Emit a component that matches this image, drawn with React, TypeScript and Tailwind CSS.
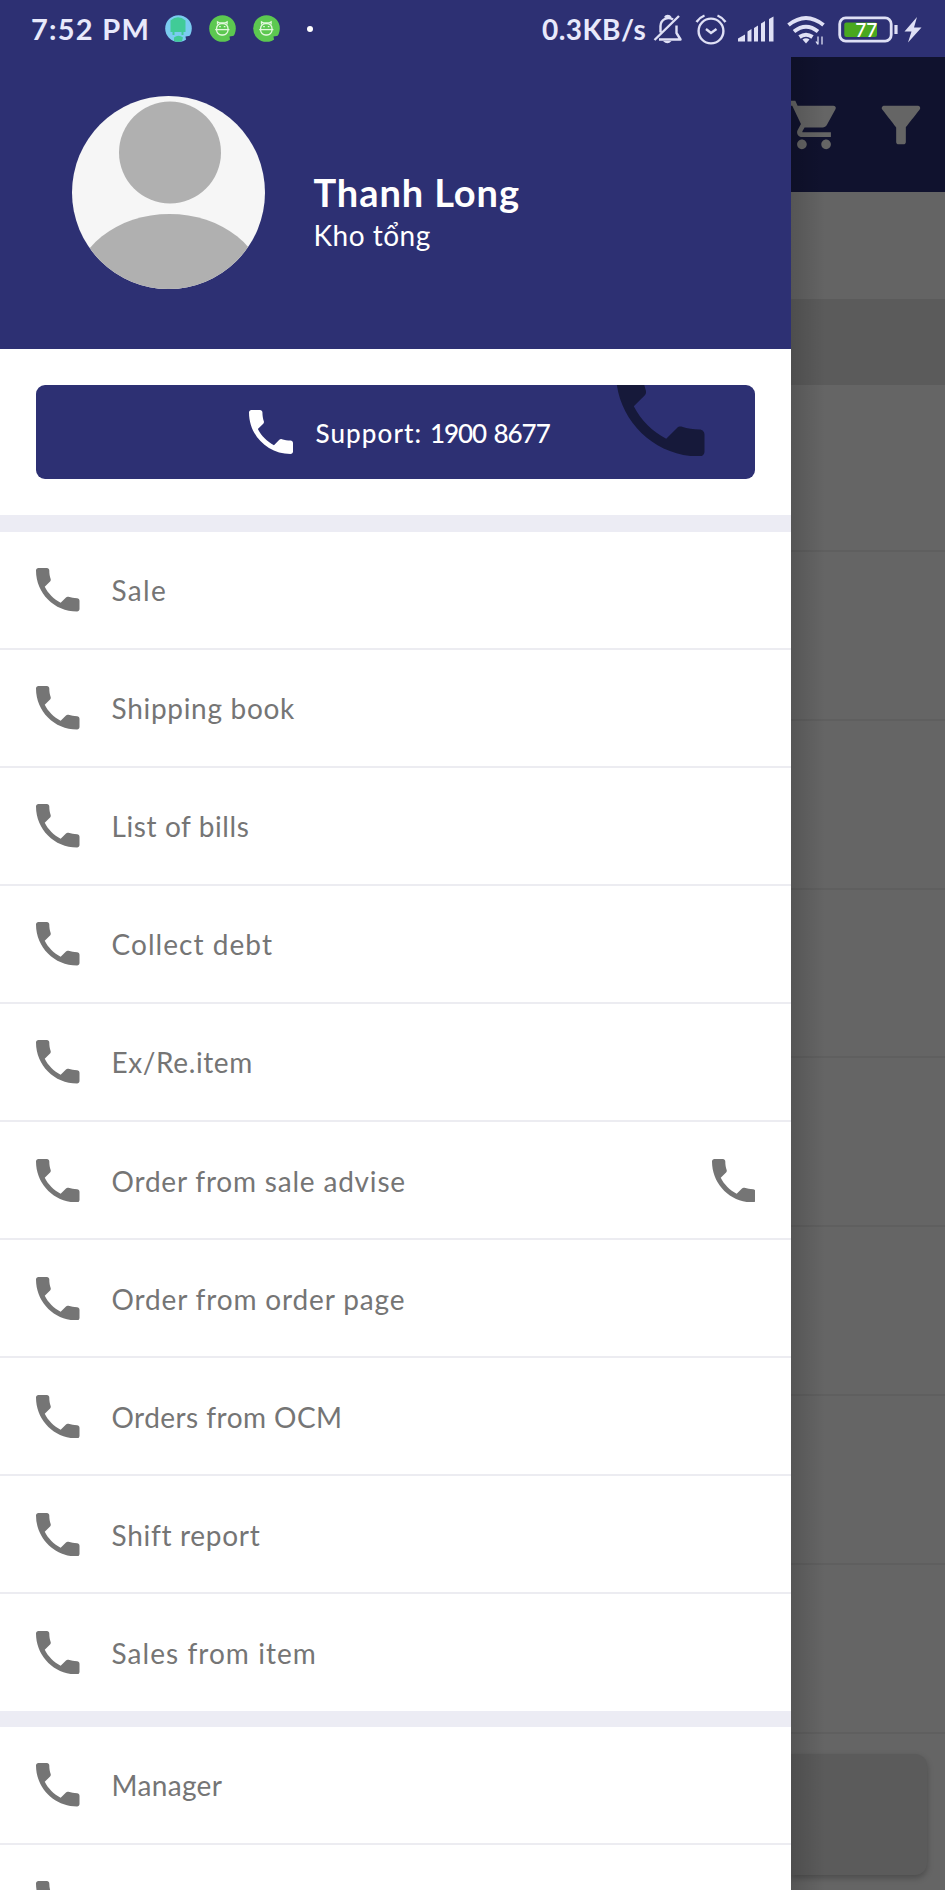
import React from "react";

const PHONE =
  "M6.62 10.79c1.44 2.83 3.76 5.14 6.59 6.59l2.2-2.2c.27-.27.67-.36 1.02-.24 1.12.37 2.33.57 3.57.57.55 0 1 .45 1 1V20c0 .55-.45 1-1 1-9.39 0-17-7.61-17-17 0-.55.45-1 1-1h3.5c.55 0 1 .45 1 1 0 1.25.2 2.45.57 3.57.11.35.03.74-.25 1.02l-2.2 2.2z";

function Phone({ className }: { className: string }) {
  return (
    <svg viewBox="3 3 18 18" className={className} fill="currentColor">
      <path d={PHONE} />
    </svg>
  );
}

type Item = { label: string; tracking: string; trailing?: boolean };

const mainItems: Item[] = [
  { label: "Sale", tracking: "tracking-[1.3px]" },
  { label: "Shipping book", tracking: "tracking-[0.7px]" },
  { label: "List of bills", tracking: "tracking-[0.6px]" },
  { label: "Collect debt", tracking: "tracking-[1.05px]" },
  { label: "Ex/Re.item", tracking: "tracking-[0.6px]" },
  { label: "Order from sale advise", tracking: "tracking-[0.8px]", trailing: true },
  { label: "Order from order page", tracking: "tracking-[0.85px]" },
  { label: "Orders from OCM", tracking: "tracking-[0.45px]" },
  { label: "Shift report", tracking: "tracking-[0.7px]" },
  { label: "Sales from item", tracking: "tracking-[1.05px]" },
];

const managerItems: Item[] = [
  { label: "Manager", tracking: "tracking-[0.35px]" },
  { label: "", tracking: "tracking-normal" },
];

function MenuRow({ item, last }: { item: Item; last?: boolean }) {
  return (
    <div
      className={
        last
          ? "flex h-[116.4px] shrink-0 items-start px-9 pt-[36.5px]"
          : "flex h-[118.1px] shrink-0 items-start border-b-2 border-[#ececf1] px-9 pt-[36.5px]"
      }
    >
      <Phone className="size-[43.5px] shrink-0 text-[#757575]" />
      <span className={`ml-[32px] flex-1 whitespace-nowrap text-[28px] leading-[45px] text-[#757575] ${item.tracking}`}>
        {item.label}
      </span>
      {item.trailing && <Phone className="size-[43.5px] shrink-0 text-[#757575]" />}
    </div>
  );
}

function ChatDot() {
  return (
    <svg viewBox="0 0 27 27" className="size-[27px]">
      <circle cx="13.5" cy="13.5" r="13.3" fill="#5cc850" />
      <path d="M20.5 21.5l7-1v7h-6z" fill="#2d3073" />
      <g fill="none" stroke="#e4f8df" strokeWidth="1.3">
        <path d="M8.5 9.5V6.8l2.2 1.2h5.2l2.2-1.2v2.7" />
        <rect x="7.6" y="8.6" width="11.4" height="11.4" rx="5" />
        <path d="M6.2 14.6h14.2" />
        <path d="M10.2 11.6h1.6M14.8 11.6h1.6" />
      </g>
    </svg>
  );
}

function GlobeDot() {
  return (
    <svg viewBox="0 0 27 27" className="size-[27px]">
      <circle cx="13.5" cy="13.5" r="13.3" fill="#7accf0" />
      <path d="M5.500 5.500Q13 -1 20.500 5.500V17H5.500z" fill="#41cb97" />
      <path d="M7.500 17h2v3h-2zM16.500 17h2v3h-2zM9 22.500q4.500-3.500 9 0l-1 3.500q-4 1.500-8 0z" fill="#41cb97" />
      <path d="M20.500 21.500l7-1v7h-6z" fill="#2d3073" />
    </svg>
  );
}

function StatusBar() {
  return (
    <div className="flex h-[57px] shrink-0 items-center bg-[#2d3073] text-[#e8e9fb]">
      <span className="ml-[31px] w-[134px] whitespace-nowrap text-[29px] font-bold leading-none tracking-[1.25px]">7:52 PM</span>
      <div className="flex items-center gap-[17px]">
        <GlobeDot />
        <ChatDot />
        <ChatDot />
      </div>
      <span className="ml-[27px] size-[6px] rounded-full bg-white" />
      <span className="ml-[229px] w-[110px] whitespace-nowrap text-[28px] font-bold leading-none tracking-[0.45px]">0.3KB/s</span>
      <svg viewBox="0 0 290 40" className="h-[40px] w-[290px]" fill="none" stroke="#dfe0f5" strokeWidth="2.4">
        <path d="M7 30.500H28.500L24.500 24V16.500M8.500 23.500V17a8 8 0 0 1 12.500-6.500M2.500 31L27 7M13 8.500a3.200 3.200 0 0 1 5.500 0" strokeLinejoin="round" />
        <path d="M11 32h8.500q-4 4.500-8.500 0z" fill="#dfe0f5" stroke="none" />
        <circle cx="59" cy="22" r="12.400" />
        <path d="M54 20l5 4 5.500-4M44.500 13q3-4.500 8-6.500M73.500 13q-3-4.500-8-6.500" />
        <g fill="#dfe0f5" stroke="none">
          <path d="M86 32.500v-3l7-4v7zM95.500 32.500V22.500l4-2.500v12.500zM102 32.500V19l4-2.500v16zM109 32.500V14.500l4-2.500v20.500zM117 32.500V10l4.500-2.500v25z" />
        </g>
        <g strokeWidth="4">
          <path d="M136.500 16q17.500-14 35 0M142 22.500q12-9.500 24 0M147.500 28q6.500-4.500 13 0" />
        </g>
        <path d="M150.500 30.500q3.500-2.500 7 0l-3.500 4z" fill="#dfe0f5" stroke="none" />
        <path d="M166 27.500v8m-2-3l2 3M170 35.500v-8" strokeWidth="1.300" />
        <rect x="187.700" y="8.900" width="51.500" height="23.200" rx="6" strokeWidth="2.800" />
        <path d="M244 16v9" strokeWidth="3.200" />
        <rect x="192.300" y="13.500" width="32.700" height="14.500" rx="2" fill="#49a81f" stroke="none" />
        <text x="203.200" y="27.600" fontSize="19" fontWeight="600" fill="#ffffff" stroke="none">77</text>
        <path d="M265 8l-12.500 14.500h7l-3.500 11 13.500-15h-7.500z" fill="#dfe0f5" stroke="none" />
      </svg>
    </div>
  );
}

function Drawer() {
  return (
    <div className="flex h-full w-[791px] shrink-0 flex-col overflow-hidden bg-white">
      <div className="flex h-[292px] shrink-0 bg-[#2d3073] pl-[72px] text-white">
        <svg viewBox="0 0 193 193" className="mt-[39px] size-[193px] shrink-0 overflow-hidden rounded-full bg-[#f6f6f6]">
          <circle cx="98" cy="56.500" r="51" fill="#b0b0b0" />
          <ellipse cx="97.500" cy="195" rx="96" ry="77" fill="#b0b0b0" />
        </svg>
        <div className="ml-[48.5px] pt-[112px]">
          <div className="whitespace-nowrap text-[38px] font-bold leading-[46px] tracking-[0.9px]">Thanh Long</div>
          <div className="whitespace-nowrap text-[28px] leading-[41px] tracking-[0.5px]">Kho tổng</div>
        </div>
      </div>
      <div className="flex h-[166px] shrink-0 items-center px-9">
        <div className="relative flex h-[94px] w-full items-start overflow-hidden rounded-[9px] bg-[#2d3073] pl-[212.5px] pt-[25px] text-white">
          <Phone className="size-[44px] shrink-0" />
          <span className="ml-[23px] whitespace-nowrap text-[26px] font-medium leading-[46px] tracking-[1.1px]">
            Support: <span className="tracking-[-1.05px]">1900<span className="ml-[2px]"> 8677</span></span>
          </span>
          <Phone className="absolute right-[50.5px] top-[-17.5px] size-[88.5px] text-[#16193a]" />
        </div>
      </div>
      <div className="h-[16.6px] shrink-0 bg-[#ececf4]" />
      {mainItems.map((item, i) => (
        <MenuRow key={item.label} item={item} last={i === mainItems.length - 1} />
      ))}
      <div className="h-[16px] shrink-0 bg-[#ececf4]" />
      {managerItems.map((item, i) => (
        <MenuRow key={i} item={item} />
      ))}
    </div>
  );
}

function Backdrop() {
  return (
    <div className="relative flex h-full flex-1 flex-col overflow-hidden bg-[#656565]">
      <div className="flex h-[135px] shrink-0 items-start bg-[#10122e] pt-[39px] text-[#656565]">
        <svg viewBox="0 0 24 24" className="-ml-[6px] size-[58px] shrink-0" fill="currentColor">
          <path d="M7 18c-1.100 0-1.990.900-1.990 2S5.900 22 7 22s2-.9 2-2-.9-2-2-2zM1 2v2h2l3.600 7.590-1.350 2.450c-.16.280-.25.610-.25.960 0 1.100.900 2 2 2h12v-2H7.420c-.14 0-.25-.11-.25-.25l.030-.12.900-1.630h7.450c.750 0 1.410-.41 1.750-1.030l3.580-6.490A1.003 1.003 0 0 0 20 4H5.210l-.94-2H1zm16 16c-1.100 0-1.990.900-1.990 2s.890 2 1.990 2 2-.9 2-2-.9-2-2-2z" />
        </svg>
        <svg viewBox="0 0 24 24" className="ml-[29px] size-[58px] shrink-0" fill="currentColor">
          <path d="M4.250 5.610C6.270 8.200 10 13 10 13v6c0 .550.450 1 1 1h2c.550 0 1-.45 1-1v-6s3.720-4.800 5.740-7.390A.998.998 0 0 0 18.950 4H5.040c-.83 0-1.300.950-.79 1.610z" />
        </svg>
      </div>
      <div className="h-[107px] shrink-0 bg-[#646464]" />
      <div className="h-[86px] shrink-0 bg-[#5b5b5b]" />
      <div className="h-[167px] shrink-0 border-b-2 border-[#5f5f5f]" />
      {[0, 1, 2, 3, 4, 5, 6].map((i) => (
        <div key={i} className="h-[168.8px] shrink-0 border-b-2 border-[#5f5f5f]" />
      ))}
      <div className="mr-[18px] mt-[20.5px] h-[121px] shrink-0 rounded-r-[12px] bg-[#5b5b5b] shadow-[0_3px_6px_rgba(0,0,0,0.25)]" />
      <div className="absolute inset-y-0 left-0 w-[34px] bg-linear-to-r from-black/15 to-transparent" />
    </div>
  );
}

export default function App() {
  return (
    <div className="flex h-[1890px] w-[945px] flex-col overflow-hidden bg-white font-['Lato','Noto_Sans',sans-serif]">
      <StatusBar />
      <div className="flex min-h-0 flex-1">
        <Drawer />
        <Backdrop />
      </div>
    </div>
  );
}
